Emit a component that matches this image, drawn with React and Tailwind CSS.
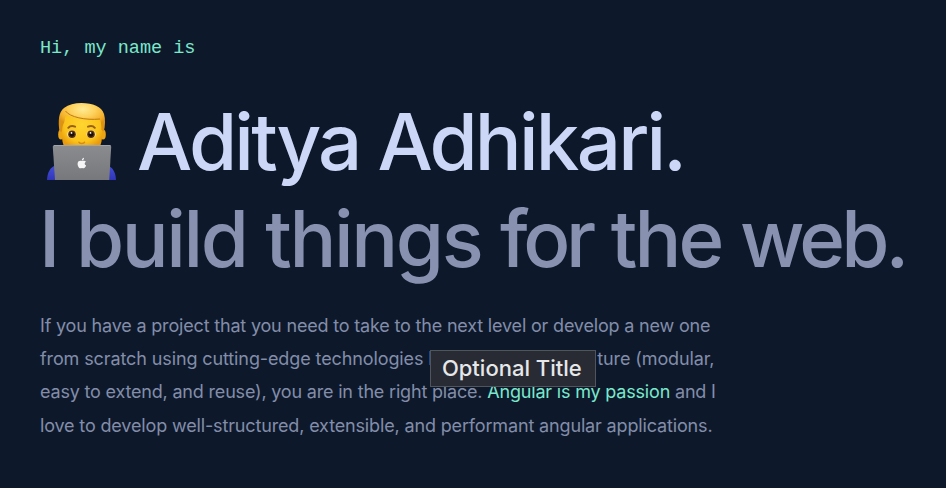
function Technologist() {
  return (
    <svg viewBox="0 0 110 100" className="h-[100px] w-[110px] shrink-0" aria-label="Technologist">
      <defs>
        <radialGradient id="face" cx="0.5" cy="0.45" r="0.62">
          <stop offset="0" stopColor="#ffd530" />
          <stop offset="0.7" stopColor="#fbc41c" />
          <stop offset="1" stopColor="#e89a0c" />
        </radialGradient>
        <radialGradient id="hair" cx="0.52" cy="0.22" r="0.62">
          <stop offset="0" stopColor="#ffeb94" />
          <stop offset="0.45" stopColor="#fdd05a" />
          <stop offset="0.8" stopColor="#f3b02a" />
          <stop offset="1" stopColor="#dc9212" />
        </radialGradient>
        <linearGradient id="lid" x1="0" y1="0" x2="0" y2="1">
          <stop offset="0" stopColor="#8b8c8f" />
          <stop offset="1" stopColor="#77787b" />
        </linearGradient>
        <linearGradient id="shirt" x1="0" y1="0" x2="0" y2="1">
          <stop offset="0" stopColor="#4450d8" />
          <stop offset="1" stopColor="#3035b8" />
        </linearGradient>
      </defs>
      <path d="M17 90c.3-7 3-12.500 8-14.500h53c5 2 7.700 7.500 8 14.500z" fill="url(#shirt)" />
      <ellipse cx="31" cy="44.500" rx="2.800" ry="5" fill="#eda512" />
      <ellipse cx="73" cy="44.500" rx="2.800" ry="5" fill="#eda512" />
      <path d="M32 30c2-9 10-13 20-13s19 4 20 13v16c0 4-.8 7.500-2.200 10.500H34.200C32.800 53.500 32 50 32 46z" fill="url(#face)" />
      <path d="M29.500 41.500C28 31 28.500 22 34 18c4.500-3.500 10.500-5 17.500-5 11.500 0 20 3.500 22.500 11 1.500 5 1.400 12-.3 17.500L71.500 40c0-4-.4-7.500-1.300-10.500-9 1-24 .2-34.700-4.700-.6 5-1 7.700-2.300 9.700-.9 2.500-1 4.500-1.200 7z" fill="url(#hair)" />
      <path d="M35.500 21c4 6 20 9.500 34.500 8" fill="none" stroke="#c07a10" strokeWidth="1" />
      <path d="M38.300 37.800c1.500-1.800 4.300-2.200 6.800-1.200M58 36.600c2.500-1 5.300-.6 6.800 1.200" fill="none" stroke="#986014" strokeWidth="2" strokeLinecap="round" />
      <ellipse cx="41.700" cy="44.300" rx="4.700" ry="3.900" fill="#fbe2a0" />
      <ellipse cx="61.200" cy="44.300" rx="4.700" ry="3.900" fill="#fbe2a0" />
      <circle cx="42" cy="44.300" r="3.800" fill="#58310f" />
      <circle cx="61" cy="44.300" r="3.800" fill="#58310f" />
      <circle cx="42" cy="44.300" r="2.400" fill="#1c1009" />
      <circle cx="61" cy="44.300" r="2.400" fill="#1c1009" />
      <circle cx="41.500" cy="42.900" r=".9" fill="#fff" />
      <circle cx="60.500" cy="42.900" r=".9" fill="#fff" />
      <path d="M49 52.300c.5 1.700 5 1.700 5.500 0" fill="none" stroke="#d88c12" strokeWidth="1.500" strokeLinecap="round" />
      <path d="M24.500 55h55q1.700 0 1.700 1.700L79.200 90H25L22.800 56.700Q22.800 55 24.500 55z" fill="url(#lid)" />
      <path d="M24 55.500h56.500" stroke="#aaabad" strokeWidth=".8" />
      <path d="M51.800 71.100c-1.100-.7-3.900-.8-4.200 2.300-.2 2.300 1.400 4.900 2.700 4.900.7 0 1-.3 1.700-.3s1 .3 1.700.3c1 0 2-1.500 2.400-2.700-1.900-.9-1.800-3-.1-3.900-1.200-1.400-3.200-1-4.200-.6z" fill="#f5f5f5" />
      <path d="M51.800 70.500c0-1.500.9-2.400 2.200-2.700.1 1.500-.9 2.600-2.200 2.700z" fill="#f5f5f5" />
    </svg>
  );
}

export default function App() {
  return (
    <main className="flex h-[488px] w-[946px] flex-col items-start overflow-hidden bg-[#0d192b] pl-10 font-['Inter',sans-serif] whitespace-nowrap">
      <p className="mt-[37px] h-6 font-['Liberation_Mono',monospace] text-[18.500px] leading-6 text-[#7ae8cb]">
        Hi, my name is
      </p>
      <h1 className="mt-[29px] -ml-[10px] flex h-[100px] items-start text-[78px] leading-[100px] font-medium tracking-[-2.800px] text-[#ccd6f6]">
        <Technologist />
        <span className="-ml-[3px] pt-[2px]">Aditya Adhikari.</span>
      </h1>
      <h2 className="-ml-px h-[100px] text-[78px] leading-[98px] font-medium tracking-[-2.900px] [word-spacing:0.7px] text-[#8892b0]">
        I <span className="tracking-[-2.400px]">build</span>{" "}
        <span className="tracking-[-2.400px]">things</span>{" "}
        <span className="tracking-[-4.200px]">for</span> the{" "}
        <span className="tracking-[-4px]">web.</span>
      </h2>
      <p className="mt-[19px] text-[18px] leading-[33.200px] tracking-[-0.180px] text-[#838da9]">
        <span className="block">
          If you have a project that you need to take to the next level or develop a new one
        </span>
        <span className="block tracking-[-0.110px]">
          from scratch using cutting-edge technologies{" "}
          <span className="relative inline-block w-[169px]">
            l
            <span className="absolute top-2 left-[2px] flex h-[37px] w-[166px] items-center justify-center border border-[#50545b] bg-[#282b34] pr-[3px] text-[22px] font-medium tracking-normal text-[#e6e7e9]">
              Optional Title
            </span>
          </span>
          ture (modular,
        </span>
        <span className="block tracking-[-0.185px]">
          easy to extend, and reuse), you are in the right place.{" "}
          <span className="text-[#7ae8cb]">Angular is my passion</span> and I
        </span>
        <span className="block tracking-[-0.150px]">
          love to develop well-structured, extensible, and performant angular applications.
        </span>
      </p>
    </main>
  );
}
